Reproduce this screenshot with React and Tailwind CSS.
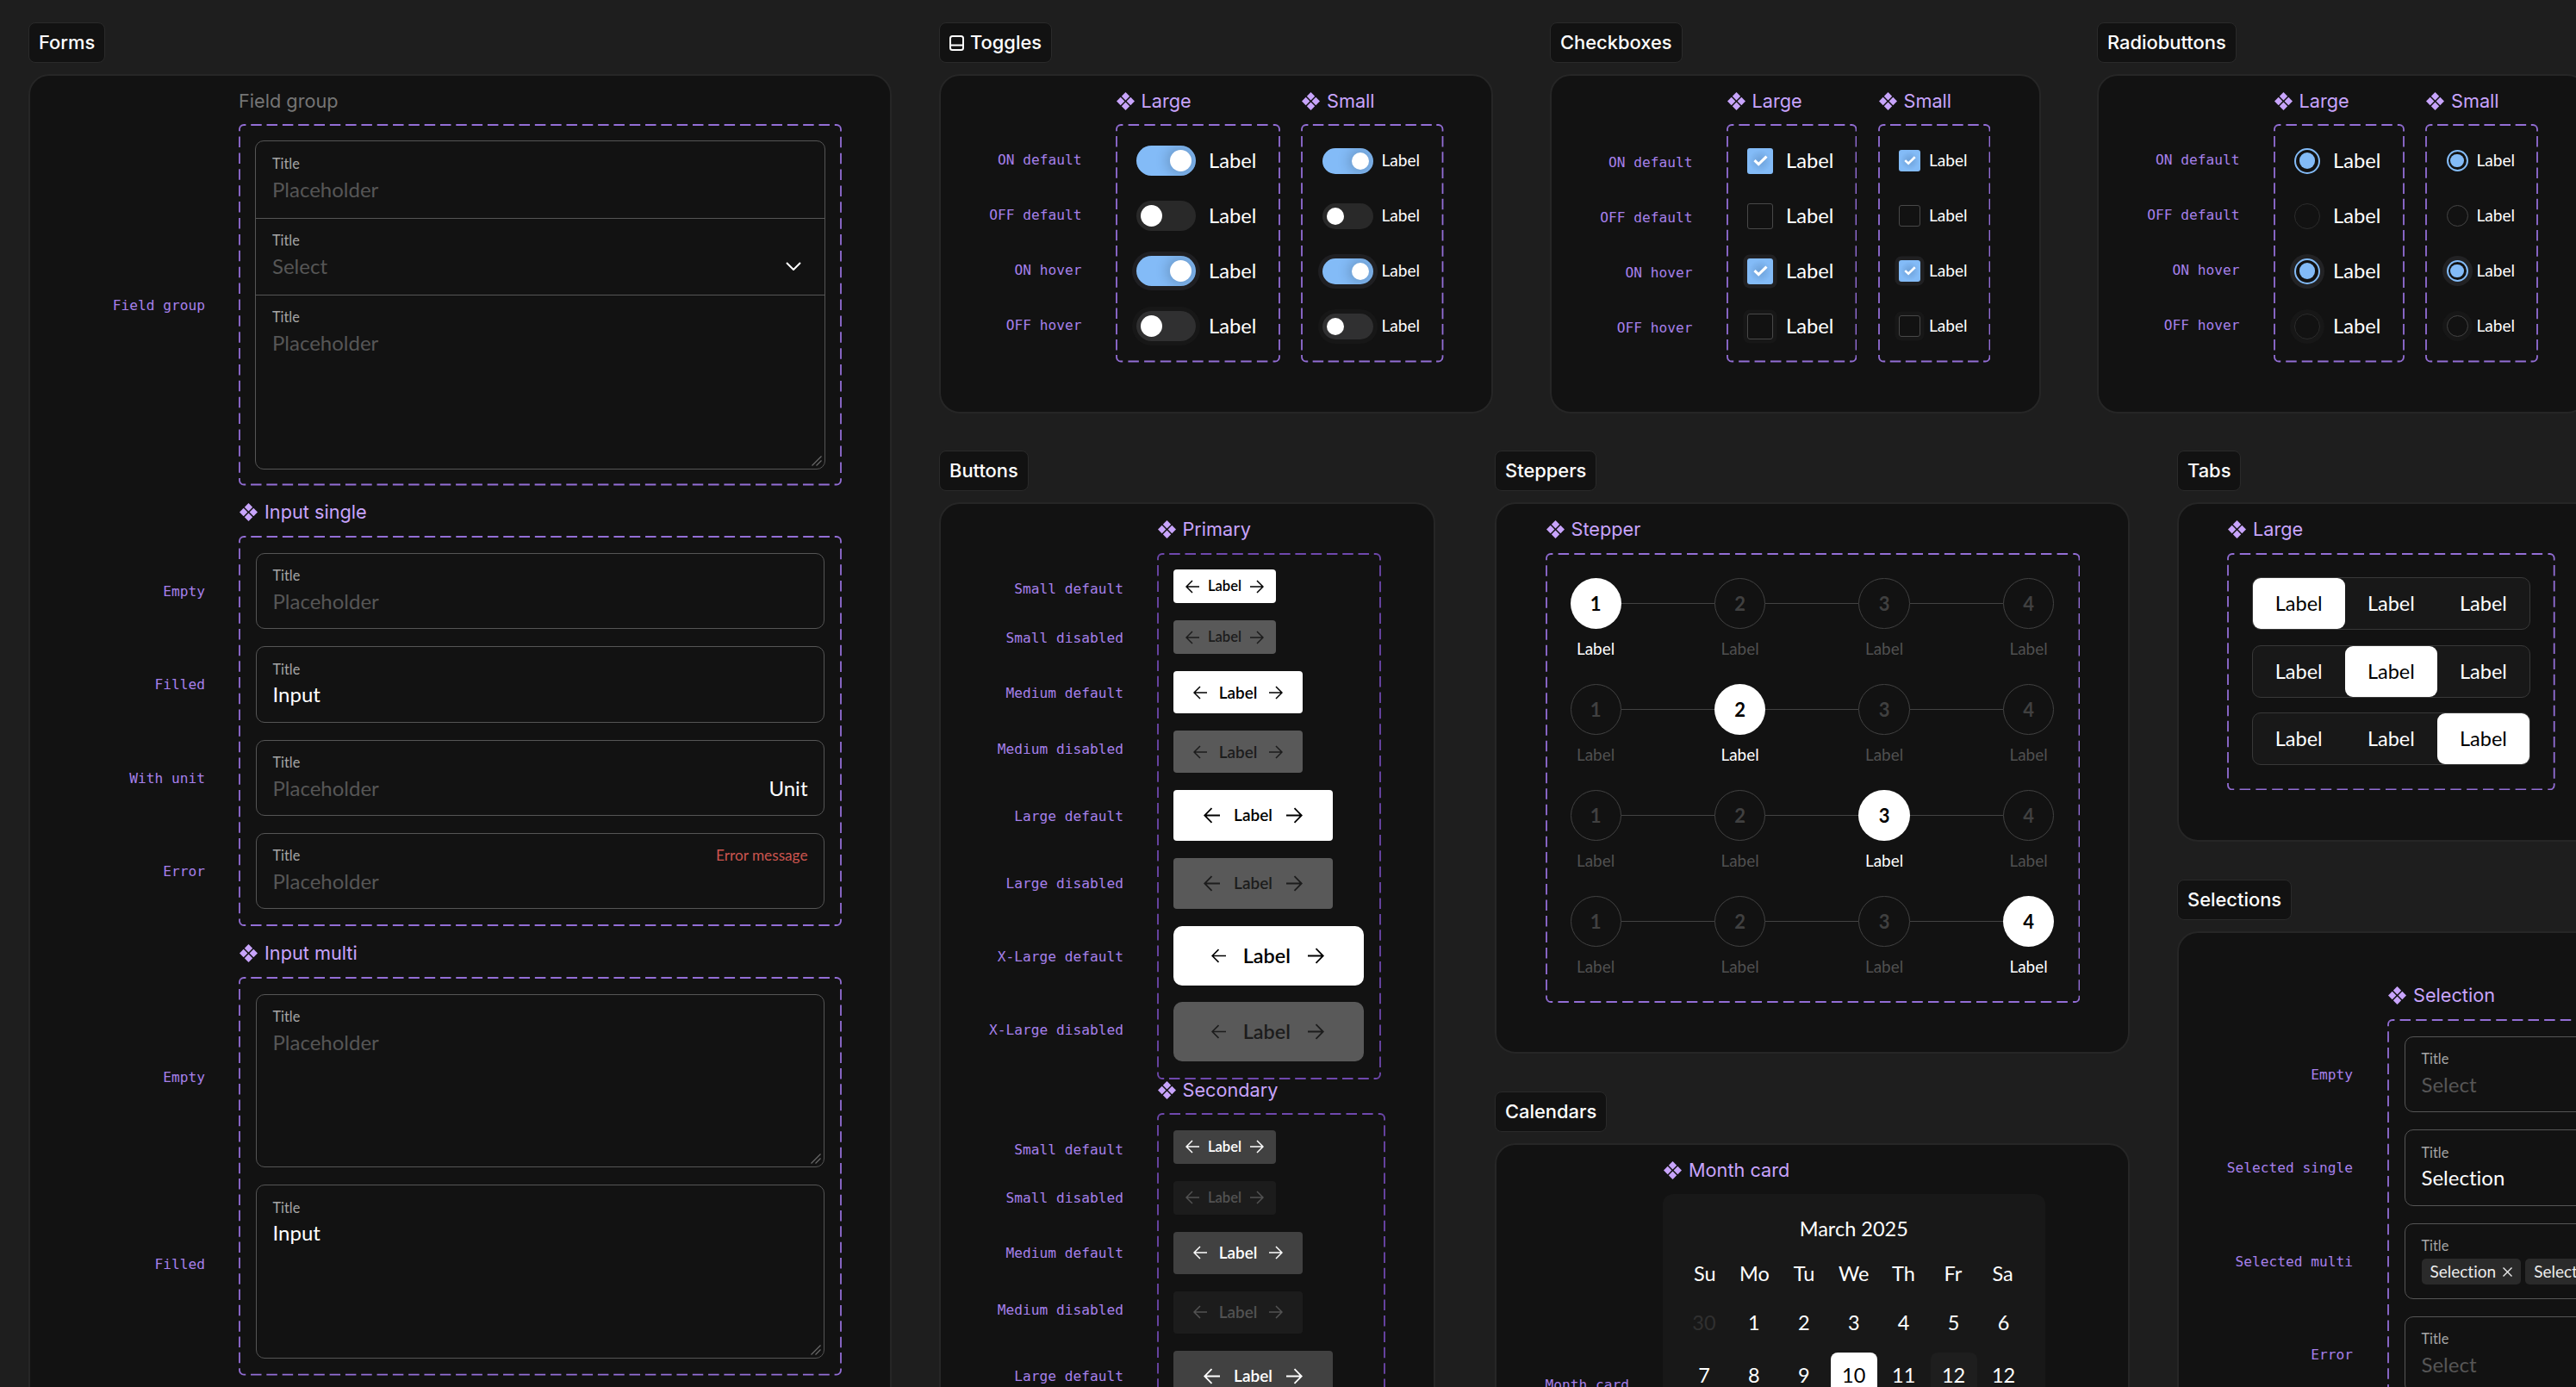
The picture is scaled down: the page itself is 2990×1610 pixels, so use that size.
import clsx from "clsx";

// Canvas helpers
function Chip({ children }) {
  return (
    <div className="flex h-[47px] w-fit items-center gap-2 rounded-lg border border-[#2a2a2a] bg-[#121212] px-[11px] font-['Inter',sans-serif] text-[21.9px] font-medium text-white">
      {children}
    </div>
  );
}

function Section({ title, icon, className, panelClass, children }) {
  return (
    <section className={clsx("shrink-0", className)}>
      <Chip>
        {icon}
        {title}
      </Chip>
      <div
        className={clsx(
          "mt-[13px] flex rounded-3xl border-2 border-[#262626] bg-[#121212]",
          panelClass
        )}
      >
        {children}
      </div>
    </section>
  );
}

function ComponentIcon() {
  return (
    <svg className="size-[21px] shrink-0" viewBox="0 0 21 21" fill="#c8a4fc">
      <path d="M10.5 0L15.2 4.7L10.5 9.4L5.8 4.7Z" />
      <path d="M10.5 11.6L15.2 16.3L10.5 21L5.8 16.3Z" />
      <path d="M4.7 5.8L9.4 10.5L4.7 15.2L0 10.5Z" />
      <path d="M16.3 5.8L21 10.5L16.3 15.2L11.6 10.5Z" />
    </svg>
  );
}

function Heading({ children, className, plain }) {
  return (
    <div
      className={clsx(
        "flex h-7 items-center gap-2 whitespace-nowrap font-['Inter',sans-serif] text-[21.7px]",
        plain ? "text-[#757575]" : "pl-px text-[#c8a4fc]",
        className
      )}
    >
      {!plain && <ComponentIcon />}
      {children}
    </div>
  );
}

function Mono({ children, className }) {
  return (
    <div
      className={clsx(
        "-mr-px flex h-6 shrink-0 items-center justify-end whitespace-nowrap font-['DejaVu_Sans_Mono',monospace] text-[16.2px] text-[#a680ea]",
        className
      )}
    >
      {children}
    </div>
  );
}

const DASH = 12.5;
const RADIUS = 5;

// One path per side, each running from the middle of one corner to the next
function DashedBox({ w, h, className, dark, children }) {
  const r = RADIUS;
  const k = r * (1 - Math.SQRT1_2);
  const x2 = w - 1;
  const y2 = h - 1;
  const a = `A${r} ${r} 0 0 1`;
  const arc = (Math.PI * r) / 2;
  const sides = [
    [`M${1 + k} ${1 + k}${a} ${1 + r} 1H${x2 - r}${a} ${x2 - k} ${1 + k}`, w],
    [`M${x2 - k} ${1 + k}${a} ${x2} ${1 + r}V${y2 - r}${a} ${x2 - k} ${y2 - k}`, h],
    [`M${x2 - k} ${y2 - k}${a} ${x2 - r} ${y2}H${1 + r}${a} ${1 + k} ${y2 - k}`, w],
    [`M${1 + k} ${y2 - k}${a} 1 ${y2 - r}V${1 + r}${a} ${1 + k} ${1 + k}`, h],
  ];
  return (
    <div
      className={clsx("relative shrink-0", className)}
      style={{ width: w, height: h }}
    >
      <svg
        className="pointer-events-none absolute inset-0"
        width={w}
        height={h}
        fill="none"
        stroke={dark ? "#6f48ae" : "#936ed6"}
        strokeWidth="1.8"
      >
        {sides.map(([d, size], i) => {
          const length = size - 2 - 2 * r + arc;
          const period = length / Math.round(length / 18.5);
          return (
            <path
              key={i}
              d={d}
              strokeDasharray={`${DASH} ${period - DASH}`}
              strokeDashoffset={DASH / 2}
            />
          );
        })}
      </svg>
      {children}
    </div>
  );
}

// Forms
function FieldBody({ value, filled, unit, error, tags, icon }) {
  return (
    <>
      <div className="flex h-5 items-center justify-between text-[16.3px] text-[#a6a6a6]">
        <span>Title</span>
        {error && <span className="text-[17.2px] text-[#cc554f]">{error}</span>}
      </div>
      {tags ? (
        <div className="mt-[5px] flex gap-[5px]">
          {tags.map((tag, i) => (
            <Tag key={i}>{tag}</Tag>
          ))}
        </div>
      ) : (
        <div
          className={clsx(
            "mt-[5.5px] flex h-7 items-center justify-between text-[24px]",
            filled ? "text-white" : "text-[#565656]"
          )}
        >
          <span>{value}</span>
          {unit && <span className="text-white">{unit}</span>}
          {icon}
        </div>
      )}
    </>
  );
}

function Tag({ children }) {
  return (
    <div className="flex h-[29.6px] shrink-0 items-center gap-2 rounded-[5px] bg-[#2a2a2a] px-[10px] text-[19px] text-[#ececec]">
      {children}
      <svg className="size-[11px]" viewBox="0 0 11 11" stroke="#ececec" strokeWidth="1.4">
        <path d="M0.5 0.5L10.5 10.5M10.5 0.5L0.5 10.5" />
      </svg>
    </div>
  );
}

function ResizeHandle() {
  return (
    <svg
      className="absolute right-[3px] bottom-[3px] size-3"
      viewBox="0 0 12 12"
      stroke="#6a6a6a"
      strokeWidth="1.2"
    >
      <path d="M0.5 11.5L11.5 0.5M5.5 11.5L11.5 5.5" />
    </svg>
  );
}

function Field({ className = "h-[88.4px]", resizable, ...body }) {
  return (
    <div
      className={clsx(
        "relative rounded-[10px] border-[1.4px] border-[#555] px-[18.5px] pt-[15.5px]",
        className
      )}
    >
      <FieldBody {...body} />
      {resizable && <ResizeHandle />}
    </div>
  );
}

function Forms() {
  return (
    <Section title="Forms" className="ml-[33px] w-[1002px]" panelClass="h-[1700px]">
      <div className="w-[202px] pt-[255px]">
        <Mono>Field group</Mono>
        <Mono className="mt-[308px]">Empty</Mono>
        <Mono className="mt-[84px]">Filled</Mono>
        <Mono className="mt-[84.7px]">With unit</Mono>
        <Mono className="mt-[84.3px]">Error</Mono>
        <Mono className="mt-[215px]">Empty</Mono>
        <Mono className="mt-[193px]">Filled</Mono>
      </div>
      <div className="ml-[40px] pt-[15px]">
        <Heading plain>Field group</Heading>
        <DashedBox w={700} h={419.5} className="mt-[13px] p-[19px]">
          <div className="relative h-[381.5px] rounded-[10px] border-[1.4px] border-[#555]">
            <div className="h-[89.5px] border-b-[1.4px] border-[#555] px-[19px] pt-[16px]">
              <FieldBody value="Placeholder" />
            </div>
            <div className="h-[89px] border-b-[1.4px] border-[#555] px-[19px] pt-[16px]">
              <FieldBody
                value="Select"
                icon={
                  <svg className="mr-[8px] h-[10px] w-[18px]" viewBox="0 0 18 10" fill="none" stroke="#fff" strokeWidth="2">
                    <path d="M1 1L9 9L17 1" />
                  </svg>
                }
              />
            </div>
            <div className="px-[19px] pt-[16px]">
              <FieldBody value="Placeholder" />
            </div>
            <ResizeHandle />
          </div>
        </DashedBox>

        <Heading className="mt-[17px]">Input single</Heading>
        <DashedBox w={700} h={453} className="mt-[13.5px] flex flex-col gap-5 p-[20px]">
          <Field value="Placeholder" />
          <Field value="Input" filled />
          <Field value="Placeholder" unit="Unit" />
          <Field value="Placeholder" error="Error message" />
        </DashedBox>

        <Heading className="mt-[17px]">Input multi</Heading>
        <DashedBox w={700} h={462.6} className="mt-[14px] flex flex-col gap-5 p-[20px]">
          <Field className="h-[201.5px]" value="Placeholder" resizable />
          <Field className="h-[201.5px]" value="Input" filled resizable />
        </DashedBox>
      </div>
    </Section>
  );
}

// Toggles, checkboxes and radiobuttons share the same 4 x 2 grid
const STATES = [
  { name: "ON default", on: true },
  { name: "OFF default" },
  { name: "ON hover", on: true, hover: true },
  { name: "OFF hover", hover: true },
];

function Toggle({ on, hover, small }) {
  return (
    <div
      className={clsx(
        "rounded-full",
        small ? "h-[30px] w-[59px]" : "h-[35px] w-[69px]",
        hover && (on ? "ring-[5px] ring-[#1f1f22]" : "ring-[5px] ring-[#171717]")
      )}
    >
      <div
        className={clsx(
          "flex size-full items-center overflow-hidden rounded-full px-[5px]",
          on ? "justify-end bg-[#83bbf7]" : hover ? "bg-[#303031]" : "bg-[#292929]"
        )}
      >
        <div
          className={clsx(
            "rounded-full bg-white",
            small ? "size-5" : "size-[25px]",
            on && "shadow-[0_0_14px_4px_rgba(0,0,0,0.18)]"
          )}
        />
      </div>
    </div>
  );
}

function Checkbox({ on, hover, small }) {
  return (
    <div
      className={clsx(
        "flex items-center justify-center rounded-[3px]",
        small ? "size-[25px]" : "size-[30px]",
        on
          ? "bg-[radial-gradient(circle,#70a4dc_10%,#83bbf7_62%)]"
          : "border-[1.5px] border-[#484848]",
        hover && (on ? "ring-[4.5px] ring-[#202022]" : "ring-[4.5px] ring-[#171717]")
      )}
    >
      {on && (
        <svg className={small ? "w-[14px]" : "w-[17px]"} viewBox="0 0 17 13" fill="none" stroke="#fff" strokeWidth="3.2">
          <path d="M1.5 6.2L6.2 10.6L15.5 1.6" />
        </svg>
      )}
    </div>
  );
}

function Radio({ on, hover, small }) {
  return (
    <div
      className={clsx(
        "flex items-center justify-center rounded-full",
        small ? "size-[25px]" : "size-[30px]",
        on
          ? "border-2 border-[#83bbf7]"
          : small
            ? "border-[1.5px] border-[#444]"
            : "border-[1.5px] border-[#2c2c2c]",
        hover && (on ? "ring-[5px] ring-[#222224]" : "ring-[5px] ring-[#171717]")
      )}
    >
      {on && (
        <div className={clsx("rounded-full bg-[#83bbf7]", small ? "size-[15.5px]" : "size-[18.5px]")} />
      )}
    </div>
  );
}

function ChoiceColumn({ Control, width, small, className }) {
  return (
    <div className={clsx("pt-[15px]", className)}>
      <Heading>{small ? "Small" : "Large"}</Heading>
      <DashedBox w={width} h={276.5} className="mt-[13px] pt-[10.5px] pl-[24.5px]">
        {STATES.map((s) => (
          <div
            key={s.name}
            className={clsx(
              "flex h-16 items-center text-white",
              small ? "gap-[10px] text-[19.1px]" : "gap-[15px] text-[23.7px]"
            )}
          >
            <Control on={s.on} hover={s.hover} small={small} />
            <span>Label</span>
          </div>
        ))}
      </DashedBox>
    </div>
  );
}

function Choices({ title, icon, className, Control, large, small, labelsClass = "pt-[86.5px]" }) {
  return (
    <Section title={title} icon={icon} className={className} panelClass="h-[393.5px]">
      <div className={clsx("flex w-[162.5px] shrink-0 flex-col gap-10", labelsClass)}>
        {STATES.map((s) => (
          <Mono key={s.name}>{s.name}</Mono>
        ))}
      </div>
      <ChoiceColumn Control={Control} width={large} className="ml-[40px]" />
      <ChoiceColumn Control={Control} width={small} small className="ml-[24.5px]" />
    </Section>
  );
}

// Buttons
function Arrow({ right, className }) {
  return (
    <svg
      className={clsx("shrink-0", right && "rotate-180", className)}
      viewBox="0 0 16 16"
      fill="none"
      stroke="currentColor"
      strokeWidth="1.5"
    >
      <path d="M16 8H1M8 1L1 8L8 15" />
    </svg>
  );
}

const BUTTON_SIZES = {
  Small: ["h-[39.4px] w-[119px] gap-[10px] rounded text-[16.6px]", "size-4", "size-4"],
  Medium: ["h-[49.3px] w-[150px] gap-[13.5px] rounded text-[18.9px]", "size-4", "size-4"],
  Large: ["h-[59.1px] w-[185px] gap-[16.5px] rounded text-[19px]", "size-[19px]", "size-[19px]"],
  "X-Large": ["h-[69px] w-[220.5px] gap-[20px] rounded-[10px] pr-[2px] text-[23.4px]", "size-[17px]", "size-[19px]"],
};

const BUTTON_COLORS = {
  primary: ["bg-white text-black", "bg-[#595959] text-[#1c1c1c]"],
  secondary: ["bg-[#414141] text-white", "bg-[#1c1c1c] text-[#525252]"],
};

function ButtonList({ kind }) {
  return Object.entries(BUTTON_SIZES).map(([size, [box, left, right]]) =>
    BUTTON_COLORS[kind].map((color) => (
      <button
        key={size + color}
        className={clsx("flex shrink-0 items-center justify-center font-semibold", box, color)}
      >
        <Arrow className={left} />
        Label
        <Arrow right className={right} />
      </button>
    ))
  );
}

const BUTTON_ROWS = [
  ["Small default", ""],
  ["Small disabled", "mt-[32.7px]"],
  ["Medium default", "mt-[40px]"],
  ["Medium disabled", "mt-[41.4px]"],
  ["Large default", "mt-[53.5px]"],
  ["Large disabled", "mt-[53.8px]"],
  ["X-Large default", "mt-[61px]"],
  ["X-Large disabled", "mt-[61px]"],
];

function ButtonLabels({ className }) {
  return (
    <div className={className}>
      {BUTTON_ROWS.map(([name, gap]) => (
        <Mono key={name} className={gap}>
          {name}
        </Mono>
      ))}
    </div>
  );
}

function Buttons() {
  return (
    <Section title="Buttons" className="w-[576px]" panelClass="h-[1400px]">
      <div className="w-[211px] shrink-0">
        <ButtonLabels className="pt-[87.3px]" />
        <ButtonLabels className="pt-[115px]" />
      </div>
      <div className="ml-[39.5px] pt-[15px]">
        <Heading>Primary</Heading>
        <DashedBox dark w={260} h={611} className="mt-[13.5px] flex flex-col items-start gap-[19.7px] p-[19.5px]">
          <ButtonList kind="primary" />
        </DashedBox>
        <Heading className="-mt-[1.5px]">Secondary</Heading>
        <DashedBox dark w={265} h={611} className="mt-[13px] flex flex-col items-start gap-[19.7px] p-[19.5px]">
          <ButtonList kind="secondary" />
        </DashedBox>
      </div>
    </Section>
  );
}

// Steppers
function Stepper({ active }) {
  const steps = [1, 2, 3, 4];
  return (
    <div className="mb-[28.3px]">
      <div className="flex items-center">
        {steps.map((n) => (
          <div key={n} className="flex items-center">
            {n > 1 && <div className="h-[1.5px] w-[108.3px] bg-[#424242]" />}
            <div
              className={clsx(
                "flex size-[59.2px] items-center justify-center rounded-full text-[22px] font-bold",
                n === active ? "bg-white text-black" : "border-[1.4px] border-[#424242] text-[#404040]"
              )}
            >
              {n}
            </div>
          </div>
        ))}
      </div>
      <div className="mt-[11px] flex gap-[108.3px]">
        {steps.map((n) => (
          <div
            key={n}
            className={clsx(
              "flex h-[24.5px] w-[59.2px] items-center justify-center text-[18.9px]",
              n === active ? "text-white" : "text-[#505050]"
            )}
          >
            Label
          </div>
        ))}
      </div>
    </div>
  );
}

function Steppers() {
  return (
    <Section title="Steppers" className="w-[737px]" panelClass="h-[640px]">
      <div className="ml-[56.5px] pt-[15px]">
        <Heading>Stepper</Heading>
        <DashedBox w={620.5} h={522} className="mt-[13.5px] px-[29px] pt-[29.3px]">
          {[1, 2, 3, 4].map((n) => (
            <Stepper key={n} active={n} />
          ))}
        </DashedBox>
      </div>
    </Section>
  );
}

// Calendars
const WEEKDAYS = ["Su", "Mo", "Tu", "We", "Th", "Fr", "Sa"];
const WEEKS = [
  [30, 1, 2, 3, 4, 5, 6],
  [7, 8, 9, 10, 11, 12, 12],
];

function Calendars() {
  return (
    <Section title="Calendars" className="mt-[44px] w-[737px]" panelClass="h-[500px]">
      <div className="w-[153px] shrink-0 pt-[267px]">
        <Mono>Month card</Mono>
      </div>
      <div className="ml-[40px] pt-[15px]">
        <Heading>Month card</Heading>
        <div className="mt-[13.5px] h-[460px] w-[443.5px] rounded-xl bg-[#181818] px-[20px] pt-[27px] text-[23.5px] text-white">
          <div className="flex h-7 items-center justify-center">March 2025</div>
          <div className="mt-[24px] grid grid-cols-7 text-center">
            {WEEKDAYS.map((d) => (
              <div key={d} className="flex h-7 items-center justify-center">{d}</div>
            ))}
          </div>
          <div className="mt-[16px] grid grid-cols-7 gap-x-[4px] gap-y-[7px] px-px">
            {WEEKS.flat().map((d, i) => (
              <div
                key={i}
                className={clsx(
                  "flex h-[54px] items-center justify-center rounded-lg",
                  i === 0 && "text-[#303030]",
                  i === 10 && "bg-white text-black",
                  i === 12 && "bg-[#1e1e1e]"
                )}
              >
                {d}
              </div>
            ))}
          </div>
        </div>
      </div>
    </Section>
  );
}

// Tabs
function Tabs() {
  return (
    <Section title="Tabs" className="w-[520px]" panelClass="h-[394px]">
      <div className="ml-[56px] pt-[15px]">
        <Heading>Large</Heading>
        <DashedBox w={380.7} h={275.5} className="mt-[13.5px] flex flex-col gap-[17.8px] px-[28.7px] pt-[28.5px]">
          {[0, 1, 2].map((active) => (
            <div
              key={active}
              className="flex h-[60.9px] rounded-[10px] border-[1.4px] border-[#383838] bg-[#181818] text-[23.5px]"
            >
              {[0, 1, 2].map((i) => (
                <div
                  key={i}
                  className={clsx(
                    "flex flex-1 items-center justify-center rounded-[9px]",
                    i === active ? "bg-white text-black" : "text-white"
                  )}
                >
                  Label
                </div>
              ))}
            </div>
          ))}
        </DashedBox>
      </div>
    </Section>
  );
}

// Selections
function Selections() {
  return (
    <Section title="Selections" className="mt-[44px] w-[900px]" panelClass="h-[800px]">
      <div className="w-[201px] shrink-0 pt-[153px]">
        <Mono>Empty</Mono>
        <Mono className="mt-[84.4px]">Selected single</Mono>
        <Mono className="mt-[84.4px]">Selected multi</Mono>
        <Mono className="mt-[84.4px]">Error</Mono>
      </div>
      <div className="ml-[41px] pt-[58px]">
        <Heading>Selection</Heading>
        <DashedBox w={600} h={600} className="mt-[14px] flex flex-col gap-5 p-[20px]">
          <Field value="Select" />
          <Field value="Selection" filled />
          <Field tags={["Selection", "Selection"]} />
          <Field value="Select" error="Error message" />
        </DashedBox>
      </div>
    </Section>
  );
}

function ToggleSectionIcon() {
  return (
    <svg className="-mr-px h-[18px] w-[17px]" viewBox="0 0 17 18" fill="none" stroke="#fff" strokeWidth="2">
      <rect x="1" y="1" width="15" height="16" rx="2.5" />
      <path d="M1 11.5H16" />
    </svg>
  );
}

export default function App() {
  return (
    <div className="flex h-[1610px] w-[2990px] overflow-hidden bg-[#1e1e1e] pt-[26px] font-['Lato',sans-serif] [font-variant-ligatures:none]">
      <Forms />
      <div className="ml-[55px] w-[1900px] shrink-0">
        <div className="flex">
          <Choices
            title="Toggles"
            icon={<ToggleSectionIcon />}
            className="w-[643px]"
            Control={Toggle}
            large={191}
            small={165.5}
          />
          <Choices
            title="Checkboxes"
            className="ml-[66px] w-[570px]"
            Control={Checkbox}
            large={151.5}
            small={130.5}
            labelsClass="pt-[89.5px]"
          />
          <Choices
            title="Radiobuttons"
            className="ml-[65px] w-[570px]"
            Control={Radio}
            large={152}
            small={131}
          />
        </div>
        <div className="mt-[43.5px] flex">
          <Buttons />
          <div className="ml-[69px]">
            <Steppers />
            <Calendars />
          </div>
          <div className="ml-[55px]">
            <Tabs />
            <Selections />
          </div>
        </div>
      </div>
    </div>
  );
}
